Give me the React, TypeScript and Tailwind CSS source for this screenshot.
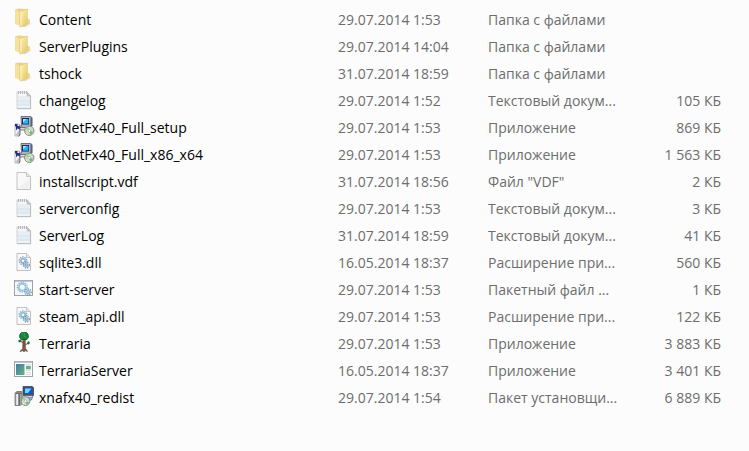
import type { ReactNode } from "react";

type Kind = "folder" | "text" | "setup" | "blank" | "dll" | "batch" | "tree" | "window" | "installer";

interface Entry {
  name: string;
  date: string;
  type: string;
  size?: string;
  kind: Kind;
}

const entries: Entry[] = [
  { name: "Content", date: "29.07.2014 1:53", type: "Папка с файлами", kind: "folder" },
  { name: "ServerPlugins", date: "29.07.2014 14:04", type: "Папка с файлами", kind: "folder" },
  { name: "tshock", date: "31.07.2014 18:59", type: "Папка с файлами", kind: "folder" },
  { name: "changelog", date: "29.07.2014 1:52", type: "Текстовый докум...", size: "105 КБ", kind: "text" },
  { name: "dotNetFx40_Full_setup", date: "29.07.2014 1:53", type: "Приложение", size: "869 КБ", kind: "setup" },
  { name: "dotNetFx40_Full_x86_x64", date: "29.07.2014 1:53", type: "Приложение", size: "1 563 КБ", kind: "setup" },
  { name: "installscript.vdf", date: "31.07.2014 18:56", type: 'Файл "VDF"', size: "2 КБ", kind: "blank" },
  { name: "serverconfig", date: "29.07.2014 1:53", type: "Текстовый докум...", size: "3 КБ", kind: "text" },
  { name: "ServerLog", date: "31.07.2014 18:59", type: "Текстовый докум...", size: "41 КБ", kind: "text" },
  { name: "sqlite3.dll", date: "16.05.2014 18:37", type: "Расширение при...", size: "560 КБ", kind: "dll" },
  { name: "start-server", date: "29.07.2014 1:53", type: "Пакетный файл ...", size: "1 КБ", kind: "batch" },
  { name: "steam_api.dll", date: "29.07.2014 1:53", type: "Расширение при...", size: "122 КБ", kind: "dll" },
  { name: "Terraria", date: "29.07.2014 1:53", type: "Приложение", size: "3 883 КБ", kind: "tree" },
  { name: "TerrariaServer", date: "16.05.2014 18:37", type: "Приложение", size: "3 401 КБ", kind: "window" },
  { name: "xnafx40_redist", date: "29.07.2014 1:54", type: "Пакет установщи...", size: "6 889 КБ", kind: "installer" },
];

function Gear({ x, y, r, color }: { x: number; y: number; r: number; color: string }) {
  return (
    <g stroke={color} fill="none">
      <circle cx={x} cy={y} r={r} strokeWidth="1.5" strokeDasharray="1.3 1" opacity="0.75" />
      <circle cx={x} cy={y} r={r - 1} strokeWidth="1.4" stroke="#a5cbe4" />
      <circle cx={x} cy={y} r={r - 1.8} strokeWidth="0.7" fill="#f7fbfd" />
    </g>
  );
}

function Disc({ x, y, r }: { x: number; y: number; r: number }) {
  return (
    <g>
      <circle cx={x} cy={y} r={r} fill="#d3d7d9" stroke="#6d7275" strokeWidth="0.8" />
      <path d={`M${x} ${y}L${x - r + 1} ${y - 2}A${r} ${r} 0 0 1 ${x - 1} ${y - r + 0.5}Z`} fill="#8be36b" />
      <path d={`M${x} ${y}L${x + r - 1} ${y + 1}A${r} ${r} 0 0 1 ${x + 1} ${y + r - 0.5}Z`} fill="#5fc767" />
      <path d={`M${x} ${y}L${x - 2} ${y + r - 1}L${x - 3.5} ${y + r - 2}Z`} fill="#f4e87b" />
      <circle cx={x} cy={y} r="1.3" fill="#fff" stroke="#858b8e" strokeWidth="0.5" />
    </g>
  );
}

function Page({ children }: { children?: ReactNode }) {
  return (
    <g>
      <path d="M3 2.5H12.5L16.5 6.5V19.5H3Z" fill="#f8f8f8" stroke="#c2c2c2" />
      <path d="M12.5 2.5V6.5H16.5" fill="#e4e4e4" stroke="#bdbdbd" strokeWidth="0.8" />
      {children}
    </g>
  );
}

const drawings: Record<Kind, ReactNode> = {
  folder: (
    <g>
      <defs>
        <linearGradient id="folderFront" x1="0" y1="0" x2="1" y2="1">
          <stop offset="0" stopColor="#fdf3bd" />
          <stop offset="1" stopColor="#e6c763" />
        </linearGradient>
        <linearGradient id="folderShade" x1="0" y1="0" x2="1" y2="0">
          <stop offset="0" stopColor="#9c9c9c" stopOpacity="0.7" />
          <stop offset="1" stopColor="#c8c8c8" stopOpacity="0" />
        </linearGradient>
      </defs>
      <path d="M8 18.5L14 12L19 16L11 19Z" fill="url(#folderShade)" />
      <path d="M11 11H14.5L15.5 12V15.5L11 17Z" fill="#f0d98a" stroke="#e2c877" strokeWidth="0.5" />
      <path d="M1.3 1.2L5 .5L12.7 1.2V16L6 17L1.3 16Z" fill="#ead089" />
      <path d="M2 1.5L5.5 4V18L2 16Z" fill="#f5e29c" />
      <path d="M5.8 3.5L13.4 1V16L6.5 19.2L5.8 18.5Z" fill="url(#folderFront)" stroke="#e2c673" strokeWidth="0.6" />
      <path d="M7 4V17.5" stroke="#fff8d6" strokeWidth="0.8" />
    </g>
  ),
  text: (
    <g>
      <path d="M3 3H13.2L16.5 7V19.5H3Z" fill="#f4f6f8" stroke="#c3c6c9" strokeWidth="0.8" />
      <path d="M3.5 8H16M3.5 10H16" stroke="#dde5ed" />
      <path d="M3.5 12H16M3.5 16H16" stroke="#c7d9e8" />
      <path d="M3.5 14H16" stroke="#d4e2ed" />
      <path d="M3.5 17.5H16V19H3.5Z" fill="#eef1f4" />
      <path d="M4.5 2V5M6.5 2V5M8.5 2V5M10.5 2V5M12.5 2V5" stroke="#acacac" strokeWidth="0.8" />
      <path d="M13.2 3.5V7H16.5Z" fill="#c8cbcd" stroke="#aaadaf" strokeWidth="0.6" />
      <path d="M16.6 7V19.7H3" fill="none" stroke="#b2b5b8" strokeWidth="0.8" />
    </g>
  ),
  setup: (
    <g>
      <path d="M7 .5H16.5L18 1.5V10H16V12.5H5.5L7.5 10Z" fill="#aab4c1" stroke="#525b67" strokeWidth="0.8" />
      <path d="M16.5 1L18.2 2V10L16.5 10.5Z" fill="#596372" />
      <rect x="8" y="2" width="7" height="6.5" fill="#1a1e8b" />
      <path d="M9 3H14.3V7.7H9Z" fill="#28b8dc" />
      <path d="M9 3H12.5L9 6.3Z" fill="#a6f0fa" />
      <path d="M5 11.5H13L11.5 14H3.5Z" fill="#d9dde2" stroke="#555" strokeWidth="0.7" />
      <path d="M1 8H5.5V20H1Z" fill="#f4f5f7" stroke="#8b8d92" strokeWidth="0.6" />
      <path d="M1 8H3.5V10H6V13.5L3.5 12.5L2 14.5V11L1 10Z" fill="#262c94" />
      <path d="M1.5 19L4.5 14.5L6 17.5L4.5 20.2Z" fill="#bdc1c7" />
      <path d="M6 9V19L4.5 20" stroke="#55575b" fill="none" strokeWidth="0.8" />
      <Disc x={15.3} y={14.8} r={4.7} />
    </g>
  ),
  blank: (
    <Page>
      <path d="M4 18.5L15.5 8V18.5Z" fill="#f0f0f0" />
    </Page>
  ),
  dll: (
    <Page>
      <Gear x={9} y={9.8} r={3.7} color="#5d8cad" />
      <Gear x={12.4} y={14} r={2.8} color="#54789a" />
    </Page>
  ),
  batch: (
    <g>
      <rect x="0.5" y="2.5" width="18" height="15" fill="#f7fafc" stroke="#9ba2ad" />
      <path d="M1 3.2H18" stroke="#b4bdc9" strokeWidth="1.2" />
      <Gear x={8.3} y={9.2} r={4.9} color="#6d9fc3" />
      <Gear x={14} y={14} r={3.1} color="#6387a5" />
    </g>
  ),
  tree: (
    <g>
      <path d="M9 6H11.3V16L13.5 19.5L11 18.5L10 20L9 18.5L6 19.5L8.7 16.5Z" fill="#83594b" stroke="#51382f" strokeWidth="0.6" />
      <path d="M9.5 11L6 9M11 13L14.5 11" stroke="#75503f" />
      <path d="M6 2L8 0H12L14 2L14.5 5L13 7.5H7L5.5 5Z" fill="#16823b" stroke="#0d522a" strokeWidth="0.7" />
      <path d="M7 2.5L9 1L11 2L9.5 4L12 5" stroke="#31a44f" fill="none" />
      <path d="M4.5 8L6.5 7.5L8 9L6 10.5L4.5 10ZM13.5 10L15 9L16 11L14.5 12.5L13 12Z" fill="#17743a" />
    </g>
  ),
  window: (
    <g>
      <defs>
        <linearGradient id="windowPane" x1="0" y1="0" x2="1" y2="1">
          <stop offset="0" stopColor="#4778ac" />
          <stop offset="1" stopColor="#62b777" />
        </linearGradient>
      </defs>
      <rect x="0.5" y="2.5" width="18" height="15" fill="#fcfcfc" stroke="#9da3ac" />
      <path d="M1 3.2H18" stroke="#b8bfcb" strokeWidth="1.4" />
      <rect x="2" y="5" width="8.5" height="11" fill="url(#windowPane)" />
      <path d="M12 5.5H17M12 11.5H17M12 13.5H17M12 15.5H17" stroke="#d3d6dc" strokeWidth="0.8" />
      <rect x="12" y="6.8" width="4.8" height="3.5" fill="#69aa91" />
    </g>
  ),
  installer: (
    <g>
      <path d="M9 .5H18L19.5 1.5V9.5H9Z" fill="#4b5362" stroke="#303743" strokeWidth="0.7" />
      <rect x="10" y="1.5" width="8.2" height="6.5" fill="#164fd1" />
      <path d="M11 2.5H17.5L14 7H11Z" fill="#72d7fb" />
      <path d="M7 11.5L9 9.5H19L17.5 14H7Z" fill="#d6d9dc" stroke="#4c5157" strokeWidth="0.7" />
      <path d="M13 11.5H18M13 12.8H17" stroke="#73787c" strokeWidth="0.7" />
      <path d="M1 7L3 5.5H8V18L6 19.5H1Z" fill="#a7aaad" stroke="#606366" strokeWidth="0.7" />
      <path d="M3.2 8V19" stroke="#f5f5f5" strokeWidth="1.7" />
      <path d="M5.2 8V19M2 7.2H7.5" stroke="#4e5052" strokeWidth="1" />
      <Disc x={11.5} y={15.2} r={4.4} />
    </g>
  ),
};

function FileIcon({ kind }: { kind: Kind }) {
  return (
    <svg viewBox="0 0 21 23" className="h-[23px] w-[21px] shrink-0" aria-hidden="true">
      {drawings[kind]}
    </svg>
  );
}

export default function App() {
  return (
    <main className="min-h-screen bg-[#fcfcfc] py-1.5 font-['Open_Sans','Noto_Sans',sans-serif] text-sm leading-5 text-[#6d6d6d]">
      <table className="w-full table-fixed border-collapse">
        <colgroup>
          <col />
          <col className="w-[150px]" />
          <col className="w-[136px]" />
          <col className="w-[125px]" />
        </colgroup>
        <tbody>
          {entries.map((entry) => (
            <tr key={entry.name} className="h-[27px] whitespace-nowrap">
              <td className="p-0 pl-3.5 text-black">
                <div className="flex items-center gap-1">
                  <FileIcon kind={entry.kind} />
                  <span>{entry.name}</span>
                </div>
              </td>
              <td className="p-0">{entry.date}</td>
              <td className="p-0">{entry.type}</td>
              <td className="p-0 pr-7 text-right">{entry.size}</td>
            </tr>
          ))}
        </tbody>
      </table>
    </main>
  );
}
